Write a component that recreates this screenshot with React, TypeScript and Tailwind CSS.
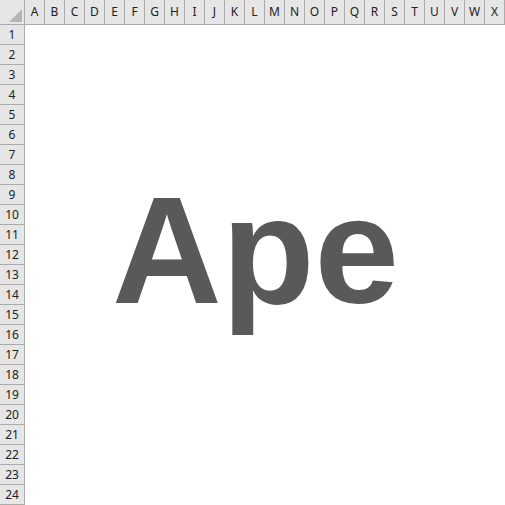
const cols = "ABCDEFGHIJKLMNOPQRSTUVWX".split("");
const rows = Array.from({ length: 24 }, (_, i) => i + 1);

export default function App() {
  return (
    <div className="relative w-[505px] h-[505px] overflow-hidden bg-white font-['Noto_Sans','Open_Sans',sans-serif] text-[12px] text-[#222]">
      {/* Column headers */}
      <div className="flex h-[25px]">
        <div className="relative w-[25px] h-[25px] shrink-0 bg-[#e6e6e6] border-r border-b border-[#ababab]">
          <svg className="absolute left-[9px] top-[9px]" width="13" height="13" viewBox="0 0 13 13">
            <polygon points="13,0 13,13 0,13" fill="#b5b5b5" />
          </svg>
        </div>
        {cols.map((c) => (
          <div
            key={c}
            className="w-[20px] h-[25px] shrink-0 bg-[#e6e6e6] border-r border-b border-[#ababab] flex items-center justify-center leading-none"
          >
            {c}
          </div>
        ))}
      </div>

      {/* Rows */}
      {rows.map((r) => (
        <div key={r} className="flex h-[20px]">
          <div className="w-[25px] h-[20px] shrink-0 bg-[#e6e6e6] border-r border-b border-[#ababab] flex items-center justify-center leading-none">
            {r}
          </div>
          <div className="flex-1 bg-white" />
        </div>
      ))}

      {/* Text box */}
      <div className="absolute left-[112px] top-[160px] font-['Liberation_Sans',Arial,sans-serif] font-bold text-[152px] leading-[180px] text-[#595959] whitespace-nowrap">
        Ape
      </div>
    </div>
  );
}
